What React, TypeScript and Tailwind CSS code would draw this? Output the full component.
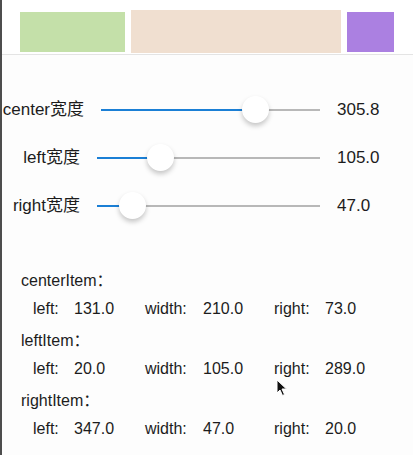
const font = { fontFamily: '"Liberation Sans", "Noto Sans CJK SC", sans-serif' };

type SliderRowProps = {
  label: string;
  labelWidth: number;
  trackStart: number;
  thumb: number;
  value: string;
};

const SliderRow = ({ label, labelWidth, trackStart, thumb, value }: SliderRowProps) => {
  const trackWidth = 318 - trackStart;
  const filled = thumb - trackStart;
  return (
    <div className="flex h-[48px] items-center text-[17px] text-[#1c1c1c]">
      <div className="shrink-0 text-right whitespace-nowrap" style={{ width: labelWidth }}>
        {label}
      </div>
      <div className="relative h-[2px] shrink-0 bg-[#b8b8b8]" style={{ marginLeft: trackStart - labelWidth, width: trackWidth }}>
        <div className="absolute left-0 top-0 h-[2px] bg-[#1b7fd5]" style={{ width: filled }} />
        <div
          className="absolute top-[-13px] h-[27px] w-[27px] rounded-full bg-white shadow-[0_3px_5px_rgba(0,0,0,0.22)]"
          style={{ left: filled - 13.5 }}
        />
      </div>
      <div className="ml-[17px]">{value}</div>
    </div>
  );
};

type Item = { name: string; left: string; width: string; right: string };

const items: Item[] = [
  { name: 'centerItem', left: '131.0', width: '210.0', right: '73.0' },
  { name: 'leftItem', left: '20.0', width: '105.0', right: '289.0' },
  { name: 'rightItem', left: '347.0', width: '47.0', right: '20.0' },
];

export default function App() {
  return (
    <div className="relative h-[455px] w-[413px] overflow-hidden border-l-2 border-[#4d4d4d] bg-[#fdfdfd]" style={font}>
      <div className="flex h-[55px] items-start border-b border-[#e4e4e4] bg-white pl-[18px]">
        <div className="mt-[12px] h-[40px] w-[105px] bg-[#c4e0a9]" />
        <div className="ml-[6px] mt-[10px] h-[43px] w-[210px] bg-[#f0dfd0]" />
        <div className="ml-[6px] mt-[12px] h-[40px] w-[47px] bg-[#ab80e1]" />
      </div>

      <div className="pt-[31px]">
        <SliderRow label="center宽度" labelWidth={82} trackStart={99} thumb={253} value="305.8" />
        <SliderRow label="left宽度" labelWidth={78} trackStart={95} thumb={158} value="105.0" />
        <SliderRow label="right宽度" labelWidth={78} trackStart={95} thumb={130} value="47.0" />
      </div>

      <div className="mt-[41px] pl-[19px] text-[16px] leading-[20px] text-[#1c1c1c]">
        {items.map((it) => (
          <div key={it.name} className="mb-[12px]">
            <div className="mb-[8px]">{it.name}：</div>
            <div className="flex pl-[12px]">
              <div className="flex w-[112px]">
                <span className="w-[41px]">left:</span>
                <span>{it.left}</span>
              </div>
              <div className="flex w-[129px]">
                <span className="w-[58px]">width:</span>
                <span>{it.width}</span>
              </div>
              <div className="flex">
                <span className="w-[51px]">right:</span>
                <span>{it.right}</span>
              </div>
            </div>
          </div>
        ))}
      </div>

      <svg className="absolute left-[274px] top-[379px]" width="12" height="18" viewBox="0 0 12 18">
        <path d="M1 1 L1 14 L4 11 L6.5 16.5 L8.5 15.5 L6 10 L10.5 10 Z" fill="#111" stroke="#fff" strokeWidth="1" />
      </svg>
    </div>
  );
}
